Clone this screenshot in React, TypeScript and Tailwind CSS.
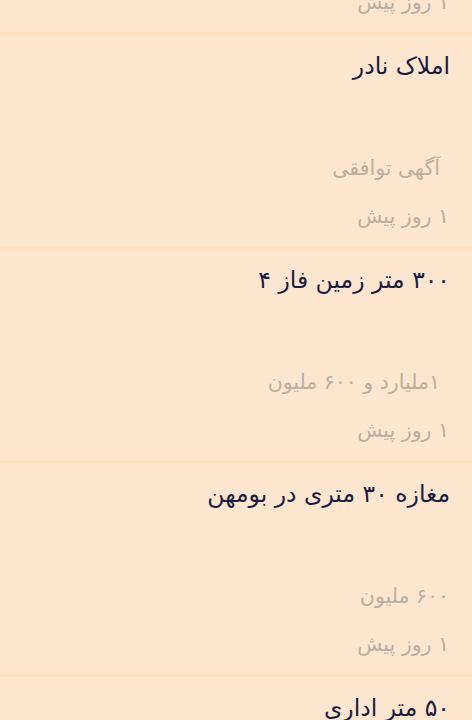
const items = [
  { title: "", price: "", time: "۱ روز پیش" },
  { title: "املاک نادر", price: "آگهی توافقی", time: "۱ روز پیش", pad: true },
  { title: "۳۰۰ متر زمین فاز ۴", price: "۱ملیارد و ۶۰۰ ملیون", time: "۱ روز پیش", pad: true },
  { title: "مغازه ۳۰ متری در بومهن", price: "۶۰۰ ملیون", time: "۱ روز پیش" },
  { title: "۵۰ متر اداری", price: "", time: "" },
];

type Item = { title: string; price: string; time: string; pad?: boolean };

function Row({ item }: { item: Item }) {
  return (
    <div className="flex h-[214px] flex-col border-b-[3px] border-[#fde0bc] bg-[#fde6cf] pr-[22px]">
      <div className="mt-[14px] h-[34px] text-[23.5px] leading-[34px] text-[#1b1b3f]">
        {item.title}
      </div>
      <div
        className={
          "mt-[68px] h-[34px] pr-px text-[20.5px] leading-[34px] text-[#bbaea2] " +
          (item.pad ? "mr-[9px]" : "")
        }
      >
        {item.price}
      </div>
      <div className="mt-[14px] h-[34px] pr-px text-[20.5px] leading-[34px] text-[#bbaea2]">
        {item.time}
      </div>
    </div>
  );
}

export default function App() {
  return (
    <div
      dir="rtl"
      className="h-[720px] w-[472px] overflow-hidden bg-[#fde6cf]"
      style={{ fontFamily: '"DejaVu Sans", sans-serif' }}
    >
      <div className="-mt-[179px]">
        {items.map((it, i) => (
          <Row key={i} item={it} />
        ))}
      </div>
    </div>
  );
}
